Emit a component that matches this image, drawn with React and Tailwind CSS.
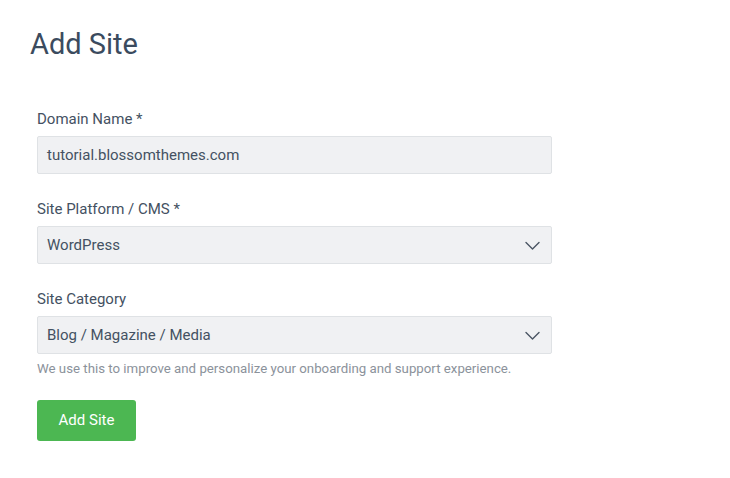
export default function App() {
  const Chevron = () => (
    <svg width="15" height="15" viewBox="0 0 15 15" fill="none" className="shrink-0">
      <path d="M1 4.5 L7.5 11 L14 4.5" stroke="#4a5563" strokeWidth="1.4" strokeLinecap="round" strokeLinejoin="round" />
    </svg>
  );
  return (
    <div className="w-[730px] h-[478px] bg-white font-['Roboto',sans-serif] text-[#3d4b5c]">
      <div className="pt-[26px] pl-[30px]">
        <h1 className="text-[29px] leading-[36px] font-normal text-[#3b4b5e]">Add Site</h1>
      </div>
      <div className="pl-[37px] pt-[48px] w-[552px]">
        <div className="flex flex-col">
          <label className="text-[15px] leading-[18px] text-[#445162]">Domain Name *</label>
          <div className="mt-[8px] h-[38px] bg-[#f0f1f3] border border-[#dfe2e5] rounded-[2px] flex items-center px-[9px] text-[15px] text-[#445162]">
            tutorial.blossomthemes.com
          </div>
        </div>
        <div className="flex flex-col mt-[26px]">
          <label className="text-[15px] leading-[18px] text-[#445162]">Site Platform / CMS *</label>
          <div className="mt-[8px] h-[38px] bg-[#f0f1f3] border border-[#dfe2e5] rounded-[2px] flex items-center justify-between pl-[9px] pr-[11px] text-[15px] text-[#445162]">
            <span>WordPress</span>
            <Chevron />
          </div>
        </div>
        <div className="flex flex-col mt-[26px]">
          <label className="text-[15px] leading-[18px] text-[#445162]">Site Category</label>
          <div className="mt-[8px] h-[38px] bg-[#f0f1f3] border border-[#dfe2e5] rounded-[2px] flex items-center justify-between pl-[9px] pr-[11px] text-[15px] text-[#445162]">
            <span>Blog / Magazine / Media</span>
            <Chevron />
          </div>
          <p className="mt-[6px] text-[13.25px] leading-[17px] text-[#8b929b] whitespace-nowrap">
            We use this to improve and personalize your onboarding and support experience.
          </p>
        </div>
        <button className="mt-[23px] w-[99px] h-[41px] bg-[#4cb752] rounded-[3px] text-white text-[15px] flex items-center justify-center">
          Add Site
        </button>
      </div>
    </div>
  );
}
